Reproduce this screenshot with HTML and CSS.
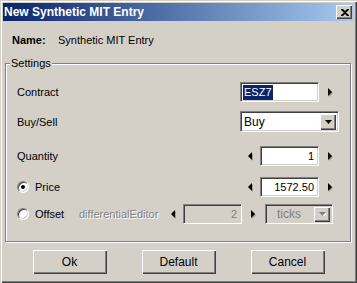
FILE: index.html
```html
<!DOCTYPE html>
<html>
<head>
<meta charset="utf-8">
<link rel="stylesheet" href="styles.css">
</head>
<body>
<div class="window">
  <div class="titlebar">
    <span class="title">New Synthetic MIT Entry</span>
    <div class="close">
      <svg width="8" height="7" viewBox="0 0 8 7"><path d="M0 0h2l2 2 2-2h2v1L5 3.5 8 6v1H6L4 5 2 7H0V6l3-2.5L0 1z" fill="#000"/></svg>
    </div>
  </div>
  <div class="name-row">
    <span class="name-label">Name:</span>
    <span class="name-value">Synthetic MIT Entry</span>
  </div>
  <div class="group">
    <span class="legend">Settings</span>
    <div class="row row-contract">
      <span class="label">Contract</span>
      <div class="field field-left field-contract"><span class="selected">ESZ7</span></div>
      <span class="arrow-box"><svg class="arr" width="6" height="9" viewBox="0 0 6 9"><path d="M2 1l4 4-4 4z" fill="#a09c94"/><path d="M1 0l4 4-4 4z" fill="#000"/></svg></span>
    </div>
    <div class="row row-side">
      <span class="label">Buy/Sell</span>
      <div class="combo combo-side">
        <span class="combo-text">Buy</span>
        <span class="drop"><svg width="7" height="4" viewBox="0 0 7 4"><path d="M0 0h7L3.5 4z" fill="#000"/></svg></span>
      </div>
    </div>
    <div class="row row-qty">
      <span class="label">Quantity</span>
      <span class="arrow-box"><svg class="arr" width="6" height="9" viewBox="0 0 6 9"><path d="M5 1v8L1 5z" fill="#a09c94"/><path d="M4 0v8L0 4z" fill="#000"/></svg></span>
      <div class="field field-num">1</div>
      <span class="arrow-box"><svg class="arr" width="6" height="9" viewBox="0 0 6 9"><path d="M2 1l4 4-4 4z" fill="#a09c94"/><path d="M1 0l4 4-4 4z" fill="#000"/></svg></span>
    </div>
    <div class="row row-price">
      <span class="label radio-label"><span class="radio checked"></span>Price</span>
      <span class="arrow-box"><svg class="arr" width="6" height="9" viewBox="0 0 6 9"><path d="M5 1v8L1 5z" fill="#a09c94"/><path d="M4 0v8L0 4z" fill="#000"/></svg></span>
      <div class="field field-num">1572.50</div>
      <span class="arrow-box"><svg class="arr" width="6" height="9" viewBox="0 0 6 9"><path d="M2 1l4 4-4 4z" fill="#a09c94"/><path d="M1 0l4 4-4 4z" fill="#000"/></svg></span>
    </div>
    <div class="row row-offset">
      <span class="label radio-label label-offset"><span class="radio"></span>Offset</span>
      <span class="disabled-text">differentialEditor</span>
      <span class="arrow-box"><svg class="arr" width="6" height="9" viewBox="0 0 6 9"><path d="M5 1v8L1 5z" fill="#a09c94"/><path d="M4 0v8L0 4z" fill="#000"/></svg></span>
      <div class="field field-num field-disabled">2</div>
      <span class="arrow-box"><svg class="arr" width="6" height="9" viewBox="0 0 6 9"><path d="M2 1l4 4-4 4z" fill="#a09c94"/><path d="M1 0l4 4-4 4z" fill="#000"/></svg></span>
      <div class="combo combo-ticks combo-disabled">
        <span class="combo-text">ticks</span>
        <span class="drop"><svg width="7" height="4" viewBox="0 0 7 4"><path d="M1 1h7L4.5 5z" fill="#fff"/><path d="M0 0h7L3.5 4z" fill="#808080"/></svg></span>
      </div>
    </div>
  </div>
  <div class="buttons">
    <div class="btn">Ok</div>
    <div class="btn">Default</div>
    <div class="btn">Cancel</div>
  </div>
</div>
</body>
</html>
```

FILE: styles.css
```css
* { box-sizing: border-box; }
body {
  margin: 0;
  background: #d4d0c8;
  font-family: "Liberation Sans", Arial, sans-serif;
  font-size: 11px;
  color: #000;
}
.window {
  width: 357px;
  height: 283px;
  padding: 3px;
  background: #d4d0c8;
  display: flex;
  flex-direction: column;
  box-shadow: inset 1px 1px #d4d0c8, inset 2px 2px #fff, inset -1px -1px #404040, inset -2px -2px #808080;
}
.titlebar {
  height: 18px;
  flex: none;
  background: linear-gradient(to right, #0a246a, #a6caf0);
  display: flex;
  align-items: center;
  justify-content: space-between;
  padding: 0 2px 0 1px;
}
.title {
  color: #fff;
  font-weight: bold;
  font-size: 12px;
  line-height: 14px;
}
.close {
  width: 16px;
  height: 14px;
  background: #d4d0c8;
  display: flex;
  align-items: center;
  justify-content: center;
  box-shadow: inset 1px 1px #fff, inset -1px -1px #404040, inset -2px -2px #808080;
  padding-left: 1px;
}
.name-row {
  margin-top: 12px;
  height: 14px;
  line-height: 14px;
  padding-left: 9px;
  display: flex;
}
.name-label { font-weight: bold; width: 46px; }
.group {
  position: relative;
  margin: 16px 3px 0 2px;
  height: 179px;
  border: 1px solid #808080;
  box-shadow: inset 1px 1px #fff, 1px 1px #fff;
  padding: 18px 0 0 11px;
  display: flex;
  flex-direction: column;
}
.legend {
  position: absolute;
  left: 4px;
  top: -8px;
  padding: 0 1px;
  background: #d4d0c8;
  line-height: 14px;
}
.row {
  display: flex;
  align-items: center;
  height: 20px;
}
.row-side { margin-top: 9px; height: 21px; }
.row-qty { margin-top: 14px; }
.row-price { margin-top: 11px; }
.row-offset { margin-top: 7px; }
.label { width: 223px; flex: none; }
.radio-label { display: flex; align-items: center; }
.label-offset { width: 62px; }
.radio {
  width: 12px;
  height: 12px;
  border-radius: 50%;
  border: 1px solid;
  border-color: #808080 #fff #fff #808080;
  box-shadow: inset 1px 1px #404040, inset -1px -1px #d4d0c8;
  background: #fff;
  margin-right: 6px;
  display: flex;
  align-items: center;
  justify-content: center;
}
.radio.checked::after {
  content: "";
  width: 4px;
  height: 4px;
  border-radius: 50%;
  background: #000;
}
.field {
  height: 20px;
  background: #fff;
  border: 1px solid;
  border-color: #808080 #fff #fff #808080;
  box-shadow: inset 1px 1px #404040, inset -1px -1px #d4d0c8;
  display: flex;
  align-items: center;
  flex: none;
}
.field-contract { width: 79px; padding-left: 2px; }
.selected {
  background: #0a246a;
  color: #fff;
  line-height: 15px;
  padding: 0 1px;
}
.field-num {
  width: 59px;
  justify-content: flex-end;
  padding-right: 4px;
}
.field-disabled {
  background: #d4d0c8;
  color: #808080;
}
.arrow-box {
  width: 20px;
  flex: none;
  display: flex;
  justify-content: center;
  align-items: center;
}
.arr { display: block; margin-left: 1px; }
.combo {
  height: 21px;
  background: #fff;
  border: 1px solid;
  border-color: #808080 #fff #fff #808080;
  box-shadow: inset 1px 1px #404040, inset -1px -1px #d4d0c8;
  display: flex;
  align-items: center;
  justify-content: space-between;
  padding: 2px;
  flex: none;
}
.combo-side { width: 99px; font-size: 12px; }
.combo-text { padding-left: 1px; }
.drop {
  width: 16px;
  height: 16px;
  background: #d4d0c8;
  box-shadow: inset 1px 1px #fff, inset -1px -1px #404040, inset -2px -2px #808080;
  display: flex;
  align-items: center;
  justify-content: center;
}
.combo-ticks {
  width: 68px;
  margin-left: 3px;
  height: 20px;
}
.combo-disabled {
  background: #d4d0c8;
  color: #808080;
}
.combo-ticks .combo-text { padding-left: 9px; font-size: 12px; }
.combo-ticks .drop { height: 15px; }
.disabled-text {
  width: 84px;
  flex: none;
  color: #808080;
  text-shadow: 1px 1px #fff;
}
.buttons {
  margin-top: 8px;
  display: flex;
  justify-content: center;
  gap: 35px;
  padding-left: 0;
  margin-left: -3px;
  margin-right: -3px;
}
.btn {
  width: 74px;
  height: 24px;
  display: flex;
  align-items: center;
  justify-content: center;
  background: #d4d0c8;
  box-shadow: inset 1px 1px #fff, inset -1px -1px #404040, inset -2px -2px #808080;
  font-size: 12px;
}
```
